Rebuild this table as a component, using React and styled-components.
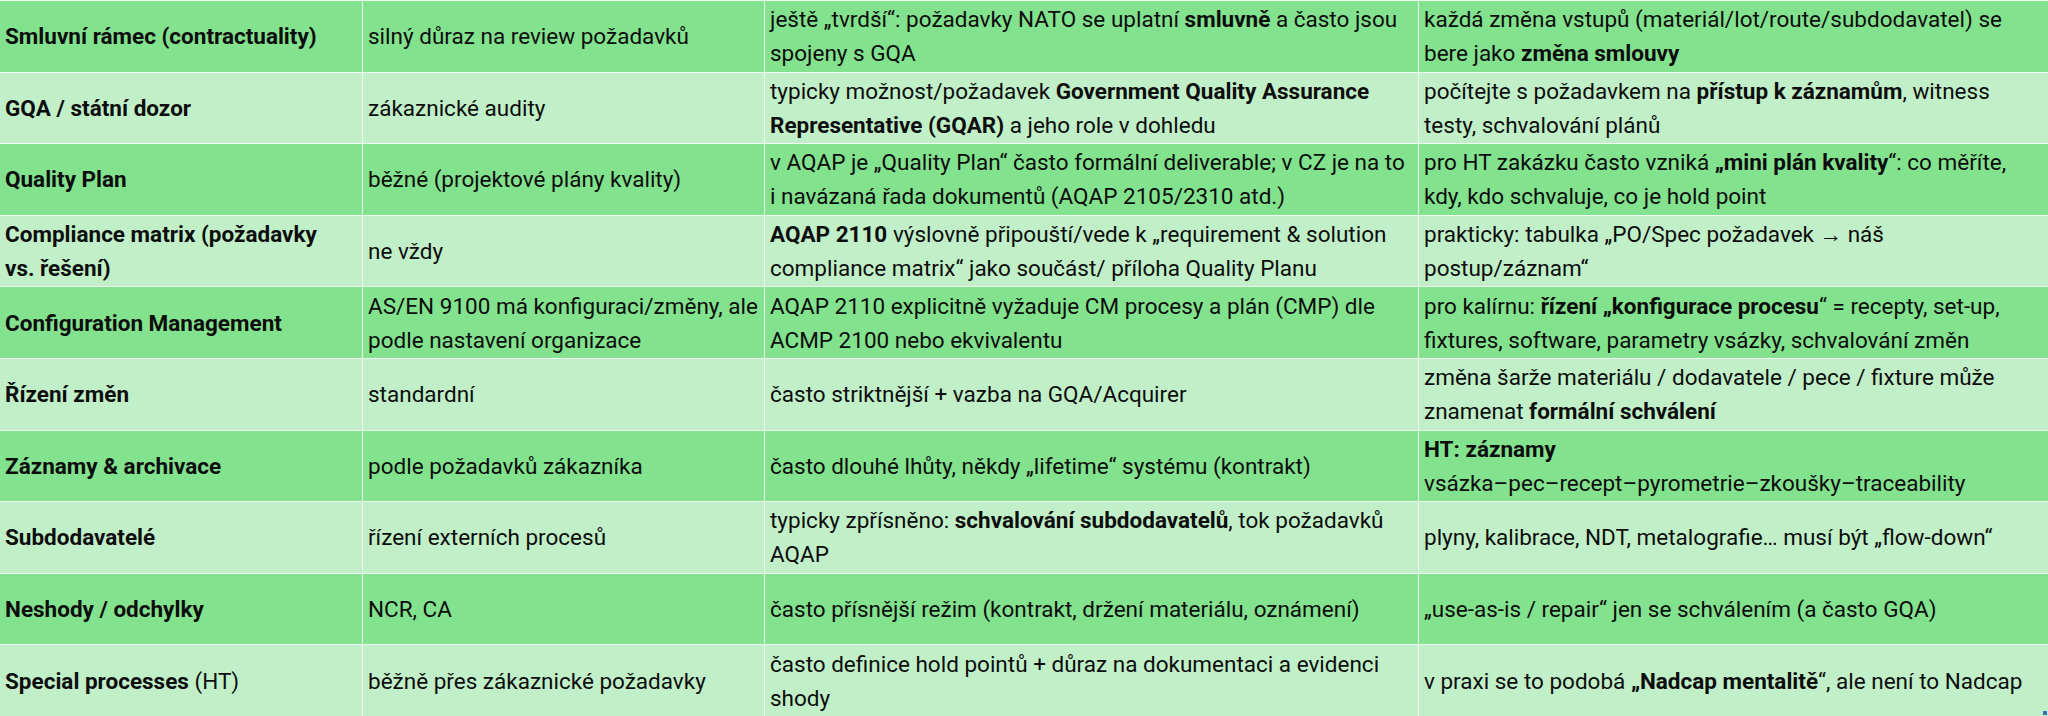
import React from "react";
import styled, { createGlobalStyle } from "styled-components";

const GlobalStyle = createGlobalStyle`
  html, body { margin: 0; padding: 0; background: #ffffff; }
  body { font-family: Roboto, "Liberation Sans", sans-serif; color: #0d0d0d; }
`;

const Sheet = styled.div`
  position: relative;
  width: 2048px;
  height: 716px;
  box-sizing: border-box;
  padding-top: 1px;
  background: #effaf0;
  display: grid;
  grid-template-columns: 362px 401px 653px 629px;
  grid-template-rows: repeat(10, 1fr);
  column-gap: 1px;
  row-gap: 1px;
`;

const Cell = styled.div`
  display: flex;
  flex-direction: column;
  justify-content: center;
  padding: 0 5px;
  background: ${(p) => (p.$dark ? "#83e28e" : "#c1f0c8")};
  font-size: 22.5px;
  line-height: 34px;
  font-weight: ${(p) => (p.$head ? 700 : 400)};
  white-space: nowrap;
  overflow: hidden;
`;

const Line = styled.span`
  display: block;
`;

const B = styled.b`
  font-weight: 700;
`;

const Plain = styled.span`
  font-weight: 400;
`;

const Handle = styled.span`
  position: absolute;
  right: 1px;
  bottom: 1px;
  width: 4px;
  height: 4px;
  background: #3d6fb6;
`;

const rows = [
  [
    ["Smluvní rámec (contractuality)"],
    ["silný důraz na review požadavků"],
    [<>ještě „tvrdší“: požadavky NATO se uplatní <B>smluvně</B> a často jsou</>, "spojeny s GQA"],
    ["každá změna vstupů (materiál/lot/route/subdodavatel) se", <>bere jako <B>změna smlouvy</B></>],
  ],
  [
    ["GQA / státní dozor"],
    ["zákaznické audity"],
    [<>typicky možnost/požadavek <B>Government Quality Assurance</B></>, <><B>Representative (GQAR)</B> a jeho role v dohledu</>],
    [<>počítejte s požadavkem na <B>přístup k záznamům</B>, witness</>, "testy, schvalování plánů"],
  ],
  [
    ["Quality Plan"],
    ["běžné (projektové plány kvality)"],
    ["v AQAP je „Quality Plan“ často formální deliverable; v CZ je na to", "i navázaná řada dokumentů (AQAP 2105/2310 atd.)"],
    [<>pro HT zakázku často vzniká <B>„mini plán kvality</B>“: co měříte,</>, "kdy, kdo schvaluje, co je hold point"],
  ],
  [
    ["Compliance matrix (požadavky", "vs. řešení)"],
    ["ne vždy"],
    [<><B>AQAP 2110</B> výslovně připouští/vede k „requirement &amp; solution</>, "compliance matrix“ jako součást/ příloha Quality Planu"],
    ["prakticky: tabulka „PO/Spec požadavek → náš", "postup/záznam“"],
  ],
  [
    ["Configuration Management"],
    ["AS/EN 9100 má konfiguraci/změny, ale", "podle nastavení organizace"],
    ["AQAP 2110 explicitně vyžaduje CM procesy a plán (CMP) dle", "ACMP 2100 nebo ekvivalentu"],
    [<>pro kalírnu: <B>řízení „konfigurace procesu</B>“ = recepty, set-up,</>, "fixtures, software, parametry vsázky, schvalování změn"],
  ],
  [
    ["Řízení změn"],
    ["standardní"],
    ["často striktnější + vazba na GQA/Acquirer"],
    ["změna šarže materiálu / dodavatele / pece / fixture může", <>znamenat <B>formální schválení</B></>],
  ],
  [
    ["Záznamy & archivace"],
    ["podle požadavků zákazníka"],
    ["často dlouhé lhůty, někdy „lifetime“ systému (kontrakt)"],
    [<B>HT: záznamy</B>, "vsázka–pec–recept–pyrometrie–zkoušky–traceability"],
  ],
  [
    ["Subdodavatelé"],
    ["řízení externích procesů"],
    [<>typicky zpřísněno: <B>schvalování subdodavatelů</B>, tok požadavků</>, "AQAP"],
    ["plyny, kalibrace, NDT, metalografie… musí být „flow-down“"],
  ],
  [
    ["Neshody / odchylky"],
    ["NCR, CA"],
    ["často přísnější režim (kontrakt, držení materiálu, oznámení)"],
    ["„use-as-is / repair“ jen se schválením (a často GQA)"],
  ],
  [
    [<>Special processes <Plain>(HT)</Plain></>],
    ["běžně přes zákaznické požadavky"],
    ["často definice hold pointů + důraz na dokumentaci a evidenci", "shody"],
    [<>v praxi se to podobá <B>„Nadcap mentalitě</B>“, ale není to Nadcap</>],
  ],
];

export default function App() {
  return (
    <>
      <GlobalStyle />
      <Sheet>
        {rows.map((row, r) =>
          row.map((lines, c) => (
            <Cell key={`${r}-${c}`} $dark={r % 2 === 0} $head={c === 0}>
              {lines.map((line, i) => (
                <Line key={i}>{line}</Line>
              ))}
            </Cell>
          ))
        )}
        <Handle />
      </Sheet>
    </>
  );
}
